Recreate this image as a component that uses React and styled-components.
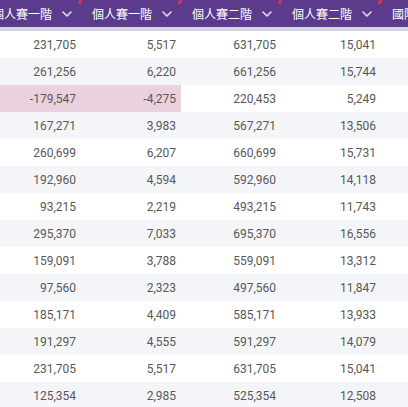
import styled, { createGlobalStyle } from "styled-components";

const GlobalStyle = createGlobalStyle`
  html, body {
    margin: 0;
    padding: 0;
    background: #ffffff;
  }
  body {
    font-family: Roboto, "Noto Sans CJK TC", sans-serif;
    overflow: hidden;
  }
`;

const columnas = ["個人賽一階", "個人賽一階", "個人賽二階", "個人賽二階", "國際賽"];

const filas = [
  ["231,705", "5,517", "631,705", "15,041"],
  ["261,256", "6,220", "661,256", "15,744"],
  ["-179,547", "-4,275", "220,453", "5,249"],
  ["167,271", "3,983", "567,271", "13,506"],
  ["260,699", "6,207", "660,699", "15,731"],
  ["192,960", "4,594", "592,960", "14,118"],
  ["93,215", "2,219", "493,215", "11,743"],
  ["295,370", "7,033", "695,370", "16,556"],
  ["159,091", "3,788", "559,091", "13,312"],
  ["97,560", "2,323", "497,560", "11,847"],
  ["185,171", "4,409", "585,171", "13,933"],
  ["191,297", "4,555", "591,297", "14,079"],
  ["231,705", "5,517", "631,705", "15,041"],
  ["125,354", "2,985", "525,354", "12,508"],
];

const Chevron = () => (
  <svg width="10" height="6" viewBox="0 0 10 6" fill="none">
    <path d="M1 1l4 4 4-4" stroke="#e4dcef" strokeWidth="1.6" strokeLinecap="round" strokeLinejoin="round" />
  </svg>
);

const Tabela = () => {
  const negativo = (v) => v.startsWith("-");

  return (
    <Janela>
      <Trilho>
        <Cabecalho>
          {columnas.map((nome, index) => (
            <CelulaCabecalho key={index}>
              <span>{nome}</span>
              <Chevron />
              <Marcador />
            </CelulaCabecalho>
          ))}
        </Cabecalho>
        {filas.map((fila, index) => {
          const destaque = negativo(fila[0]);
          return (
            <Linha key={index} $par={index % 2 === 1}>
              {fila.map((valor, i) => (
                <Celula key={i} $rosa={destaque && i < 2}>{valor}</Celula>
              ))}
              <Celula>{fila[3]}</Celula>
            </Linha>
          );
        })}
      </Trilho>
    </Janela>
  );
};

const Janela = styled.div`
  width: 408px;
  height: 407px;
  overflow: hidden;
`;

const Trilho = styled.div`
  margin-left: -19px;
  width: 500px;
`;

const Cabecalho = styled.div`
  display: flex;
  height: 27px;
  background-color: #5c3b8d;
  border-bottom: 4px solid #d6d5d8;
`;

const CelulaCabecalho = styled.div`
  position: relative;
  width: 100px;
  flex: none;
  box-sizing: border-box;
  display: flex;
  align-items: center;
  justify-content: space-between;
  padding: 0 9px 0 11px;
  color: #ffffff;
  font-family: "Noto Sans CJK TC", sans-serif;
  font-size: 12px;
  svg {
    margin-top: 1px;
  }
`;

const Marcador = styled.i`
  position: absolute;
  top: -2px;
  right: -1px;
  width: 3px;
  height: 6px;
  background: #d8354a;
  transform: skewX(-20deg);
`;

const Linha = styled.div`
  display: flex;
  height: 27px;
  background-color: ${(p) => (p.$par ? "#f4f5f8" : "#ffffff")};
`;

const Celula = styled.div`
  width: 100px;
  flex: none;
  box-sizing: border-box;
  display: flex;
  align-items: center;
  justify-content: flex-end;
  padding-right: 5px;
  font-size: 12px;
  color: #585858;
  background-color: ${(p) => (p.$rosa ? "#e9d2dd" : "transparent")};
`;

export default function App() {
  return (
    <>
      <GlobalStyle />
      <Tabela />
    </>
  );
}
